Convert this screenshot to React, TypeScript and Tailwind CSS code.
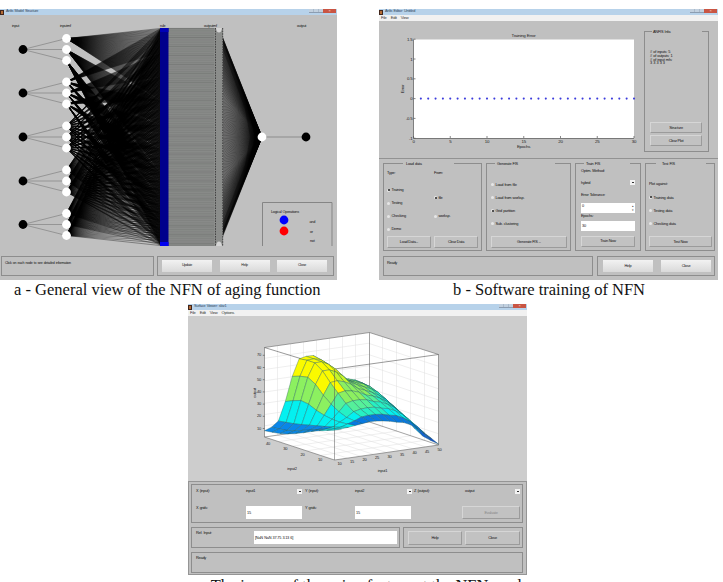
import type { ReactNode } from 'react'
import clsx from 'clsx'

const inputYs = [49.5, 93, 137, 181, 224.5]
const RULES = 243
const ruleY = (i: number) => 28.4 + (i / (RULES - 1)) * 217.2

function ruleLinks(input: number) {
  const div = 3 ** (4 - input)
  let d = ''
  for (let i = 0; i < RULES; i++) {
    const mf = Math.floor(i / div) % 3
    d += `M66.5 ${inputYs[input] + (mf - 1) * 11}L161 ${ruleY(i).toFixed(2)}`
  }
  return d
}

const rules = Array.from({ length: RULES }, (_, i) => i)
const outputLinks = rules.map((i) => `M219 ${ruleY(i).toFixed(2)}L262 137`).join('')

function TitleBar({ title }: { title: string }) {
  return (
    <div className="flex h-[6px] shrink-0 items-center bg-[#b7d2ea]">
      <div className="h-[5px] w-[4px] border border-[#41261c] bg-[#b46b35]" />
      <span className="ml-[2px] text-[3.8px] leading-none text-[#31465c]">{title}</span>
      <div className="ml-auto mr-[1px] flex h-full items-start">
        <div className="flex h-[4px] w-[14px] border-b border-[#8c9db1] bg-[#c1d0df]">
          <div className="w-[5px] border-r border-[#a9b9ca]" />
          <div className="w-[5px] border-r border-[#a9b9ca]" />
        </div>
        <div className="flex h-[4px] w-[13px] items-center justify-center bg-[#c95543] text-[4px] leading-none text-[#f5d5cf]">×</div>
      </div>
    </div>
  )
}

function MenuBar({ items }: { items: string[] }) {
  return (
    <div className="flex h-[6px] shrink-0 items-center gap-[4px] bg-[#f1f1f1] pl-[2px] text-[4.1px] leading-none text-[#333]">
      {items.map((item) => (
        <span key={item}>{item}</span>
      ))}
    </div>
  )
}

function Button({ children, className, light }: { children: ReactNode; className?: string; light?: boolean }) {
  return (
    <button
      className={clsx(
        'flex shrink-0 items-center justify-center leading-none',
        light
          ? 'bg-linear-to-b from-[#f2f2f2] to-[#d9d9d9]'
          : 'border border-t-[#d6d6d6] border-l-[#d6d6d6] border-r-[#9b9b9b] border-b-[#9b9b9b] bg-[#c2c2c2]',
        className,
      )}
    >
      {children}
    </button>
  )
}

function Panel({ children, className }: { children?: ReactNode; className?: string }) {
  return <div className={clsx('shrink-0 border border-[#8d8d8d]', className)}>{children}</div>
}

function Group({ title, legend, className, children }: { title: string; legend: string; className?: string; children: ReactNode }) {
  return (
    <Panel className={clsx('relative', className)}>
      <div className={clsx('absolute -top-[3px] flex h-[5px] items-center bg-[#c0c0c0] leading-none', legend)}>{title}</div>
      {children}
    </Panel>
  )
}

function Radio({ children, on, className }: { children: ReactNode; on?: boolean; className?: string }) {
  return (
    <div className={clsx('flex h-[13.1px] items-center gap-[1.5px]', className)}>
      <div className="flex h-[3px] w-[3px] items-center justify-center rounded-full bg-[#e6e6e6]">
        {on && <div className="h-[2px] w-[2px] rounded-full bg-[#222]" />}
      </div>
      {children}
    </div>
  )
}

function Drop({ className }: { className?: string }) {
  return (
    <div className={clsx('flex h-[5px] w-[5px] shrink-0 items-center justify-center bg-[#f2f2f2]', className)}>
      <div className="h-[1px] w-[2px] bg-[#333]" />
    </div>
  )
}

function NetworkDiagram() {
  return (
    <svg viewBox="0 15 337 231" className="block h-[231px] w-[337px] shrink-0">
      <g fill="none" stroke="#000">
        {inputYs.map((y, k) => (
          <path key={y} d={ruleLinks(k)} strokeWidth={0.36} />
        ))}
        <path d={outputLinks} strokeWidth={0.42} />
      </g>
      <path d="M223 38L262 137L223 234.500V222L245 165L250 137L245 109L223 50Z" fill="#000" opacity="0.35" />
      <path d="M223 38L262 137L223 234.500V229L246 172L255 137L246 102L223 43Z" fill="#000" opacity="0.6" />
      {inputYs.map((y) => (
        <g key={y}>
          {[-11, 0, 11].map((dy) => (
            <g key={dy}>
              <line x1="23" y1={y} x2="66.5" y2={y + dy} stroke="#777" strokeWidth="0.6" />
              <circle cx="66.5" cy={y + dy} r="4.4" fill="#fff" />
            </g>
          ))}
          <circle cx="23" cy={y} r="4.4" fill="#000" />
        </g>
      ))}
      <rect x="168" y="28" width="55" height="218" fill="#8b8d8b" />
      {rules.filter((i) => i % 2 === 0).map((i) => (
        <line key={i} x1="168" x2="214" y1={ruleY(i)} y2={ruleY(i)} stroke={i % 10 === 0 ? '#5e605e' : '#757775'} strokeWidth={0.45} />
      ))}
      <rect x="160" y="28" width="8.5" height="218" fill="#00008c" />
      <rect x="160" y="28" width="8.5" height="4" fill="#0000b8" />
      <rect x="160" y="242" width="8.5" height="4" fill="#0000f0" />
      <path d="M215.5 28V246M222.7 28V246" stroke="#444" strokeWidth="1" strokeDasharray="1.6 1" />
      <path d="M216 28H222Q221.500 32.500 219 32.500Q216.500 32.500 216 28ZM216 246H222Q221.500 241.500 219 241.500Q216.500 241.500 216 246Z" fill="#d4d4d4" />
      <line x1="262" y1="137" x2="306" y2="137" stroke="#777" strokeWidth="0.7" />
      <circle cx="262" cy="137" r="4.4" fill="#fff" />
      <circle cx="306" cy="137" r="4.4" fill="#000" />
      <path d="M262.500 246V202.500H332V246" fill="none" stroke="#858585" strokeWidth="1" />
      <circle cx="284" cy="220" r="4.4" fill="#00f" />
      <circle cx="284" cy="231" r="4.4" fill="#f00" />
      <path d="M281 239.500H287" stroke="#a8cfa8" strokeWidth="0.6" />
      <g fontSize="3.800" fill="#111">
        <text x="12" y="26.500">input</text>
        <text x="60" y="26.500">inputmf</text>
        <text x="160" y="26.500">rule</text>
        <text x="204" y="26.500">outputmf</text>
        <text x="297" y="26.500">output</text>
        <text x="271" y="212.500">Logical Operations</text>
        <text x="309.500" y="222.500">and</text>
        <text x="310" y="232.500">or</text>
        <text x="310" y="242">not</text>
      </g>
    </svg>
  )
}

function ModelWindow() {
  return (
    <div className="flex h-[271px] w-[337px] flex-col bg-[#c0c0c0] text-[3.6px]">
      <TitleBar title="Anfis Model Structure" />
      <NetworkDiagram />
      <div className="flex gap-[3px] pt-[10px] pl-[1px]">
        <Panel className="h-[20px] w-[153px] pt-[5px] pl-[3px] leading-none">Click on each node to see detailed information</Panel>
        <Panel className="flex h-[20px] w-[177px] items-center gap-[7.5px] pl-[4px]">
          <Button light className="h-[12px] w-[50px]">Update</Button>
          <Button light className="h-[12px] w-[50px]">Help</Button>
          <Button light className="h-[12px] w-[50px]">Close</Button>
        </Panel>
      </div>
    </div>
  )
}

function ErrorPlot() {
  const px = (v: number) => 413.5 + v * 7.35
  const py = (v: number) => 98.6 - v * 39.6
  return (
    <svg viewBox="379 21 262 138" className="block h-[138px] w-[262px] shrink-0">
      <rect x="413.500" y="39.500" width="220.500" height="98.500" fill="#fff" />
      <path d="M413.500 39.500V138.500H634" fill="none" stroke="#666" strokeWidth="0.8" />
      {Array.from({ length: 30 }, (_, i) => (
        <circle key={i} cx={px(i + 1)} cy="98.600" r="1.050" fill="#3c3cdc" />
      ))}
      <g fontSize="4.400" fill="#222">
        {[0, 5, 10, 15, 20, 25, 30].map((v) => (
          <g key={v}>
            <path d={`M${px(v)} 138V136`} stroke="#555" strokeWidth="0.7" />
            <text x={px(v)} y="143" textAnchor="middle">{v}</text>
          </g>
        ))}
        {[1.5, 1, 0.5, 0, -0.5, -1].map((v) => (
          <g key={v}>
            <path d={`M413.500 ${py(v)}H415.500`} stroke="#555" strokeWidth="0.7" />
            <text x="412.500" y={py(v) + 1.5} textAnchor="end">{v}</text>
          </g>
        ))}
        <text x="523.500" y="37" textAnchor="middle">Training Error</text>
        <text x="523.500" y="147.500" textAnchor="middle">Epochs</text>
        <text transform="translate(404 89) rotate(-90)" textAnchor="middle">Error</text>
      </g>
    </svg>
  )
}

function TrainingWindow() {
  return (
    <div className="flex h-[271px] w-[339px] flex-col bg-[#c0c0c0] text-[3.9px] text-[#111]">
      <TitleBar title="Anfis Editor: Untitled" />
      <MenuBar items={['File', 'Edit', 'View']} />
      <div className="flex h-[138px] shrink-0 gap-[3px] border-b border-[#929292]">
        <ErrorPlot />
        <Group title="ANFIS Info." legend="left-[7px] w-[50px] pl-[1px]" className="mt-[10px] flex h-[121px] w-[65px] flex-col pl-[5px] leading-none">
          <div className="mt-[18px] leading-[3.8px]">
            <p># of inputs: 5</p>
            <p># of outputs: 1</p>
            <p># of input mfs:</p>
            <p>3 3 3 3 3</p>
          </div>
          <Button className="mt-[57px] h-[11px] w-[52px]">Structure</Button>
          <Button className="mt-[2px] h-[11px] w-[52px]">Clear Plot</Button>
        </Group>
      </div>
      <div className="flex gap-[4px] pt-[4px] pl-[4px] leading-none">
        <Group title="Load data" legend="left-[19px] w-[51px] pl-[3px]" className="h-[88px] w-[99px] px-[3px]">
          <div className="flex h-[72px]">
            <div className="w-[47px]">
              <div className="flex h-[18px] items-center">Type:</div>
              <Radio on className="mt-[1.5px]">Training</Radio>
              <Radio>Testing</Radio>
              <Radio>Checking</Radio>
              <Radio>Demo</Radio>
            </div>
            <div>
              <div className="flex h-[18px] items-center">From:</div>
              <Radio on className="mt-[9px]">file</Radio>
              <Radio className="mt-[5.5px]">worksp.</Radio>
            </div>
          </div>
          <div className="flex gap-[3px]">
            <Button className="h-[12px] w-[44px]">Load Data...</Button>
            <Button className="h-[12px] w-[44px]">Clear Data</Button>
          </div>
        </Group>
        <Group title="Generate FIS" legend="left-[8px] w-[60px] pl-[2px]" className="h-[88px] w-[85px] px-[4px] pt-[14px]">
          <Radio>Load from file</Radio>
          <Radio>Load from worksp.</Radio>
          <Radio on>Grid partition</Radio>
          <Radio>Sub. clustering</Radio>
          <Button className="mt-[6px] h-[12px] w-[76px]">Generate FIS ...</Button>
        </Group>
        <Group title="Train FIS" legend="left-[8px] w-[46px] pl-[2px]" className="flex h-[88px] w-[66px] flex-col px-[5px] pt-[5px]">
          <p>Optim. Method:</p>
          <div className="mt-[7px] flex h-[6px] items-center justify-between">
            hybrid
            <Drop />
          </div>
          <p className="mt-[7.500px]">Error Tolerance:</p>
          <div className="mt-[5.500px] flex h-[10px] shrink-0 justify-between bg-white pt-[1px] pl-[1px]">
            0
            <div className="flex w-[3px] flex-col justify-between py-[1px] text-[3px] text-[#444]">
              <span>▴</span>
              <span>▾</span>
            </div>
          </div>
          <p className="mt-[1px]">Epochs:</p>
          <div className="mt-[3px] flex h-[10px] shrink-0 items-center bg-white pl-[1px]">30</div>
          <Button className="mt-[5px] h-[11px] w-[54px]">Train Now</Button>
        </Group>
        <Group title="Test FIS" legend="left-[10px] w-[50px] pl-[6px]" className="h-[88px] w-[70px] px-[3px] pt-[18px]">
          <p>Plot against:</p>
          <Radio on className="mt-[5px]">Training data</Radio>
          <Radio>Testing data</Radio>
          <Radio>Checking data</Radio>
          <Button className="mt-[6px] h-[11px] w-[63px]">Test Now</Button>
        </Group>
      </div>
      <div className="flex gap-[4px] pt-[5px] pl-[4px]">
        <Panel className="h-[20px] w-[210px] pt-[4px] pl-[3px] leading-none">Ready</Panel>
        <Panel className="flex h-[20px] w-[118px] items-center gap-[8px] pl-[5px]">
          <Button light className="h-[12px] w-[50px]">Help</Button>
          <Button light className="h-[12px] w-[50px]">Close</Button>
        </Panel>
      </div>
    </div>
  )
}

// Surface heights: rows follow input2 (near to far), columns follow input1
const us = [0, 0.25, 0.5, 0.75, 1]
const vs = [0, 0.13, 0.2, 0.27, 0.34, 0.5, 0.6, 0.7, 0.85, 1]
const heights = [
  [0.33, 0.34, 0.35, 0.36, 0.37, 0.35, 0.32, 0.29, 0.17, 0.01],
  [0.26, 0.28, 0.33, 0.38, 0.44, 0.46, 0.43, 0.4, 0.28, 0.05],
  [0.17, 0.23, 0.36, 0.5, 0.62, 0.6, 0.53, 0.49, 0.38, 0.2],
  [0.1, 0.18, 0.43, 0.68, 0.82, 0.75, 0.62, 0.55, 0.48, 0.31],
  [0.07, 0.15, 0.36, 0.64, 0.82, 0.81, 0.66, 0.54, 0.5, 0.4],
]

function interp(xs: number[], ys: number[], x: number) {
  let i = 0
  while (i < xs.length - 2 && x > xs[i + 1]) i++
  const slope = (k: number) => {
    const a = Math.max(0, k - 1)
    const b = Math.min(xs.length - 1, k + 1)
    return (ys[b] - ys[a]) / (xs[b] - xs[a])
  }
  const h = xs[i + 1] - xs[i]
  const t = (x - xs[i]) / h
  const t2 = t * t
  const t3 = t2 * t
  return (
    (2 * t3 - 3 * t2 + 1) * ys[i] +
    (t3 - 2 * t2 + t) * h * slope(i) +
    (3 * t2 - 2 * t3) * ys[i + 1] +
    (t3 - t2) * h * slope(i + 1)
  )
}

const heightAt = (u: number, v: number) => Math.min(0.83, interp(us, heights.map((row) => interp(vs, row, v)), u))
const project = (u: number, v: number, z: number) =>
  `${(334.5 - 70 * u + 104 * v).toFixed(2)},${(460 - 23 * u - 15 * v - 90 * z).toFixed(2)}`

function colorAt(u: number, v: number, z: number) {
  if (v < 0.13 && u > 0.25) return '#0a86e8'
  if (u < 0.12 && v > 0.2) return v > 0.85 ? '#1450c8' : '#0878e0'
  if (v < 0.4 && u > 0.45 && z > 0.39) return z > 0.62 ? '#fafa00' : '#8cf060'
  if (z < 0.1) return '#1060d8'
  if (z < 0.18) return '#08a0f0'
  if (z < 0.24) return '#06ccf4'
  if (z < 0.4) return '#04f0f0'
  if (z < 0.46) return '#26f0c4'
  if (z < 0.51) return '#55f09a'
  if (z < 0.66) return '#8cf060'
  if (z < 0.71) return '#c8f428'
  return '#fafa00'
}

function Surface() {
  const NU = 9
  const NV = 15
  const cells = []
  for (let i = NU - 1; i >= 0; i--) {
    for (let j = NV - 1; j >= 0; j--) {
      const [u0, u1, v0, v1] = [i / NU, (i + 1) / NU, j / NV, (j + 1) / NV]
      const pts = [[u0, v0], [u1, v0], [u1, v1], [u0, v1]].map(([u, v]) => project(u, v, heightAt(u, v)))
      const um = (u0 + u1) / 2
      const vm = (v0 + v1) / 2
      cells.push(<polygon key={`${i}-${j}`} points={pts.join(' ')} fill={colorAt(um, vm, heightAt(um, vm))} />)
    }
  }
  return (
    <g stroke="#1d5a5a" strokeWidth="0.35" strokeLinejoin="round">
      {cells}
    </g>
  )
}

function SurfacePlot() {
  const seg = (a: string, b: string) => `M${a}L${b}`
  const grid = []
  for (let k = 1; k < 8; k++) {
    const t = k / 8
    grid.push(seg(project(0, t, 0), project(1, t, 0)), seg(project(1, t, 0), project(1, t, 1)))
    grid.push(seg(project(1, 0, t), project(1, 1, t)), seg(project(1, 1, t), project(0, 1, t)))
  }
  for (let k = 1; k < 5; k++) {
    const t = k / 5
    grid.push(seg(project(t, 0, 0), project(t, 1, 0)), seg(project(t, 1, 0), project(t, 1, 1)))
  }
  return (
    <svg viewBox="188 316 339 165" className="block h-[165px] w-[339px] shrink-0 bg-[#cdcdcd]">
      <path d="M264.500 347.500L369.500 332.500L438.500 354.500V445L334.500 460L264.500 437Z" fill="#fff" />
      <path d={grid.join('')} stroke="#dedede" strokeWidth="0.5" fill="none" />
      <path d="M264.500 347.500L369.500 332.500L438.500 354.500V445L334.500 460L264.500 437ZM369.500 332.500V422L438.500 445M369.500 422L264.500 437" fill="none" stroke="#666" strokeWidth="0.6" />
      <path d="M264.500 347.500L334.500 369L438.500 354.500" fill="none" stroke="#555" strokeWidth="0.6" />
      <Surface />
      <path d="M334.500 369V460" fill="none" stroke="#555" strokeWidth="0.5" />
      <g fontSize="4" fill="#222" textAnchor="middle">
        {[10, 20, 30, 40, 50, 60, 70].map((v, i) => (
          <g key={v}>
            <path d={`M262.800 ${428.5 - i * 12.2}H264.500`} stroke="#444" strokeWidth="0.6" />
            <text x="259" y={429.500 - i * 12.2}>{v}</text>
          </g>
        ))}
        {[40, 30, 20, 10].map((v, i) => (
          <text key={v} x={268 + i * 17.3} y={444.500 + i * 5.6}>{v}</text>
        ))}
        {[10, 15, 20, 25, 30, 35, 40, 45, 50].map((v, i) => (
          <text key={v} x={339.500 + i * 12.5} y={464.500 - i * 1.7}>{v}</text>
        ))}
        <text x="292" y="469.500">input2</text>
        <text x="382.500" y="471.500">input1</text>
        <text transform="translate(255.500 393) rotate(-90)">output</text>
      </g>
    </svg>
  )
}

function SurfaceWindow() {
  return (
    <div className="flex h-[271px] w-[339px] flex-col bg-[#c0c0c0] text-[3.9px] leading-none text-[#111]">
      <TitleBar title="Surface Viewer: skiv1" />
      <MenuBar items={['File', 'Edit', 'View', 'Options']} />
      <SurfacePlot />
      <div className="flex h-[94px] flex-col gap-[4px] border border-[#959595] px-[2px] pt-[2px]">
        <Panel className="flex h-[39px] w-[332px] flex-col pl-[4px]">
          <div className="flex h-[12px] items-center">
            <span className="w-[50px]">X (input):</span>
            <span className="w-[51px]">input1</span>
            <Drop />
            <span className="ml-[3px] w-[50px]">Y (input):</span>
            <span className="w-[52px]">input2</span>
            <Drop />
            <span className="ml-[2px] w-[51px]">Z (output):</span>
            <span className="w-[50px]">output</span>
            <Drop />
          </div>
          <div className="flex pt-[9px]">
            <span className="w-[50px]">X grids:</span>
            <div className="flex h-[13px] w-[56px] items-center bg-white pl-[1px]">15</div>
            <span className="ml-[3px] w-[50px]">Y grids:</span>
            <div className="flex h-[13px] w-[56px] items-center bg-white pl-[1px]">15</div>
            <Button className="ml-[51px] h-[13px] w-[58px] text-[#888]">Evaluate</Button>
          </div>
        </Panel>
        <div className="flex gap-[3px]">
          <Panel className="flex h-[21px] w-[209px] pt-[3px] pl-[4px]">
            <span className="w-[58px]">Ref. Input:</span>
            <div className="flex h-[13px] w-[143px] items-center bg-white pl-[1px]">[NaN NaN 37.75 3.13 6]</div>
          </Panel>
          <Panel className="flex h-[21px] w-[120px] items-center gap-[3px] pl-[4px]">
            <Button className="h-[14px] w-[54px]">Help</Button>
            <Button className="h-[14px] w-[55px]">Close</Button>
          </Panel>
        </div>
        <Panel className="h-[21px] w-[332px] pt-[3px] pl-[4px]">Ready</Panel>
      </div>
    </div>
  )
}

export default function App() {
  return (
    <div className="h-[582px] w-[723px] overflow-hidden bg-white pt-[9px] font-['Liberation_Sans',sans-serif] tracking-[-0.24px] [word-spacing:0.45px] text-[#111]">
      <div className="flex gap-[42px]">
        <ModelWindow />
        <TrainingWindow />
      </div>
      <div className="flex h-[24px] font-['Liberation_Serif',serif] text-[16.5px] leading-[20px] tracking-normal whitespace-nowrap text-[#111] [word-spacing:0px]">
        <p className="w-[337px] pl-[14px]">a - General view of the NFN of aging function</p>
        <p className="pl-[116px]">b - Software training of NFN</p>
      </div>
      <div className="pl-[188px]">
        <SurfaceWindow />
      </div>
      <p className="pt-[1px] pl-[190px] font-['Liberation_Serif',serif] text-[16.4px] leading-[20px] tracking-normal whitespace-nowrap text-[#111] [word-spacing:0px]">
        c - The image of the aging factors at the NFN mode
      </p>
    </div>
  )
}
